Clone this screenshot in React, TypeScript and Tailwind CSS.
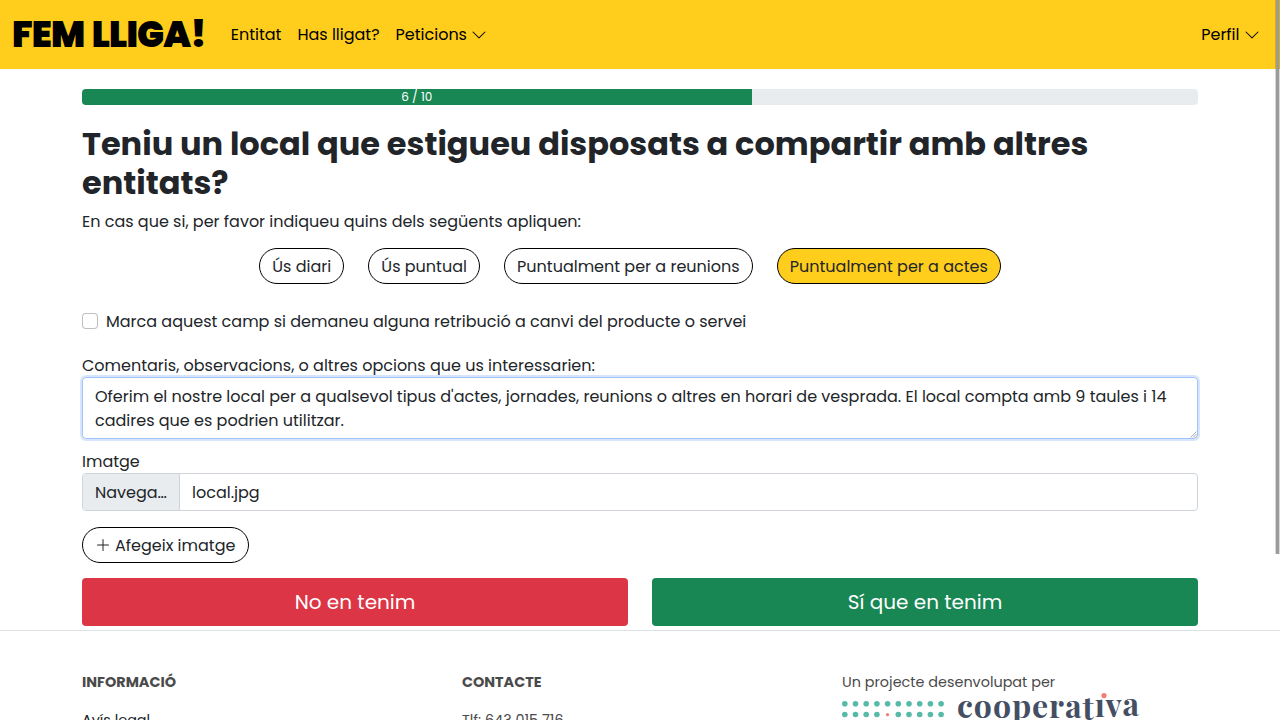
import type { ReactNode } from 'react';
import { BsChevronDown, BsPlusLg } from 'react-icons/bs';

function Pill({ active = false, children }: { active?: boolean; children: ReactNode }) {
  return (
    <button
      type="button"
      className={`flex h-9 items-center rounded-full border border-black px-3 pt-0.5 ${active ? 'bg-[#ffcd1c]' : 'bg-white'}`}
    >
      {children}
    </button>
  );
}

function Navbar() {
  return (
    <header className="flex h-[69px] items-center bg-[#ffcd1c] pr-[20.5px] pl-3 text-black">
      <a className="w-[203px] pt-px text-[36px] leading-none font-black tracking-[-0.9px] whitespace-nowrap [word-spacing:2.3px]">
        FEM LLIGA!
      </a>
      <nav className="flex flex-1 items-center gap-4 pl-[15.7px]">
        <a>Entitat</a>
        <a>Has lligat?</a>
        <a className="flex items-center gap-1">
          Peticions <BsChevronDown className="size-4" />
        </a>
        <a className="ml-auto flex items-center gap-1">
          Perfil <BsChevronDown className="size-4" />
        </a>
      </nav>
    </header>
  );
}

const dots = Array.from({ length: 10 }, (_, i) => i);

function CooperativaLogo() {
  return (
    <svg className="block" width="300" height="32" viewBox="0 0 300 32" aria-label="cooperativa">
      {dots.map((i) => (
        <g key={i}>
          <circle cx={2.8 + i * 10.7} cy="10.7" r="2.8" fill="#57baa6" />
          {i === 4 ? (
            <circle cx="45.5" cy="21.7" r="1.6" fill="#f37b70" />
          ) : (
            <circle cx={2.8 + i * 10.7} cy="21.5" r="2.8" fill="#57baa6" />
          )}
        </g>
      ))}
      <text
        x="115"
        y="24.6"
        textLength="182"
        fill="#454f63"
        className="font-['Playfair_Display','Liberation_Serif',serif] text-[32px] font-bold"
      >
        coopera<tspan dy="2.5">t</tspan><tspan dy="-3.5">ı</tspan>v<tspan dy="-0.7">a</tspan>
      </text>
      <circle cx="262" cy="2.6" r="2.6" fill="#f37b70" />
    </svg>
  );
}

export default function App() {
  return (
    <div className="relative h-[720px] overflow-hidden bg-white font-['Poppins',sans-serif] text-base leading-6 text-[#212529]">
      <Navbar />
      <main className="mx-auto w-[1116px] pt-5">
        <div className="h-4 overflow-hidden rounded bg-[#e9ecef]">
          <div className="flex h-4 w-[60%] items-center justify-center bg-[#198754] text-xs text-white">6 / 10</div>
        </div>

        <h1 className="mt-[20.2px] text-[32px] leading-[38.4px] font-bold">
          Teniu un local que estigueu disposats a compartir amb altres entitats?
        </h1>
        <p className="mt-2">En cas que si, per favor indiqueu quins dels següents apliquen:</p>

        <div className="mt-[14.4px] flex justify-center gap-[24.2px] pr-5">
          <Pill>Ús diari</Pill>
          <Pill>Ús puntual</Pill>
          <Pill>Puntualment per a reunions</Pill>
          <Pill active>Puntualment per a actes</Pill>
        </div>

        <label className="mt-[26px] flex items-center gap-2">
          <span className="mb-0.5 size-4 rounded border border-black/25 bg-white" />
          Marca aquest camp si demaneu alguna retribució a canvi del producte o servei
        </label>

        <label className="mt-5 block">Comentaris, observacions, o altres opcions que us interessarien:</label>
        <div className="relative -mt-px h-[62px] rounded border border-[#9fc2f7] px-3 pt-[7px] shadow-[0_0_0_2px_#d8e6fd]">
          Oferim el nostre local per a qualsevol tipus d'actes, jornades, reunions o altres en horari de vesprada. El
          local compta amb 9 taules i 14 cadires que es podrien utilitzar.
          <svg className="absolute right-0 bottom-0" width="7" height="7" viewBox="0 0 7 7" stroke="#999" strokeWidth="0.8">
            <path d="M0.5 6.5L6.5 0.5M3 6.5L6.5 3M5.2 6.5L6.5 5.2" />
          </svg>
        </div>

        <label className="mt-[11px] block">Imatge</label>
        <div className="-mt-px flex h-[38px] overflow-hidden rounded border border-[#ced4da]">
          <span className="flex w-[97px] items-center border-r border-[#ced4da] bg-[#e9ecef] pt-0.5 pl-3">Navega…</span>
          <span className="flex items-center pt-0.5 pl-3">local.jpg</span>
        </div>

        <div className="mt-4 flex">
          <Pill>
            <BsPlusLg className="mr-1 mb-0.5 size-4" />
            <span className="pr-[0.4px]">Afegeix imatge</span>
          </Pill>
        </div>

        <div className="mt-[15px] grid grid-cols-2 gap-6 text-xl text-white">
          <button type="button" className="h-12 rounded bg-[#dc3545]">
            No en tenim
          </button>
          <button type="button" className="h-12 rounded bg-[#198754]">
            Sí que en tenim
          </button>
        </div>
      </main>

      <footer className="mt-1 border-t border-[#dee2e6] pt-[40.4px] text-[14.4px] leading-[21.6px] text-[#4a4a4a]">
        <div className="mx-auto grid w-[1116px] grid-cols-[380px_380px_356px]">
          <div>
            <h2 className="font-bold">INFORMACIÓ</h2>
            <a className="mt-[17px] block text-[#212529]">Avís legal</a>
          </div>
          <div>
            <h2 className="font-bold">CONTACTE</h2>
            <p className="mt-[17px]">Tlf: 643 015 716</p>
          </div>
          <div>
            <p>Un projecte desenvolupat per</p>
            <CooperativaLogo />
          </div>
        </div>
      </footer>

      <div className="absolute top-0 right-0 h-[554px] w-[5px] border-x border-black/15 bg-[#999c99] bg-clip-padding" />
    </div>
  );
}
